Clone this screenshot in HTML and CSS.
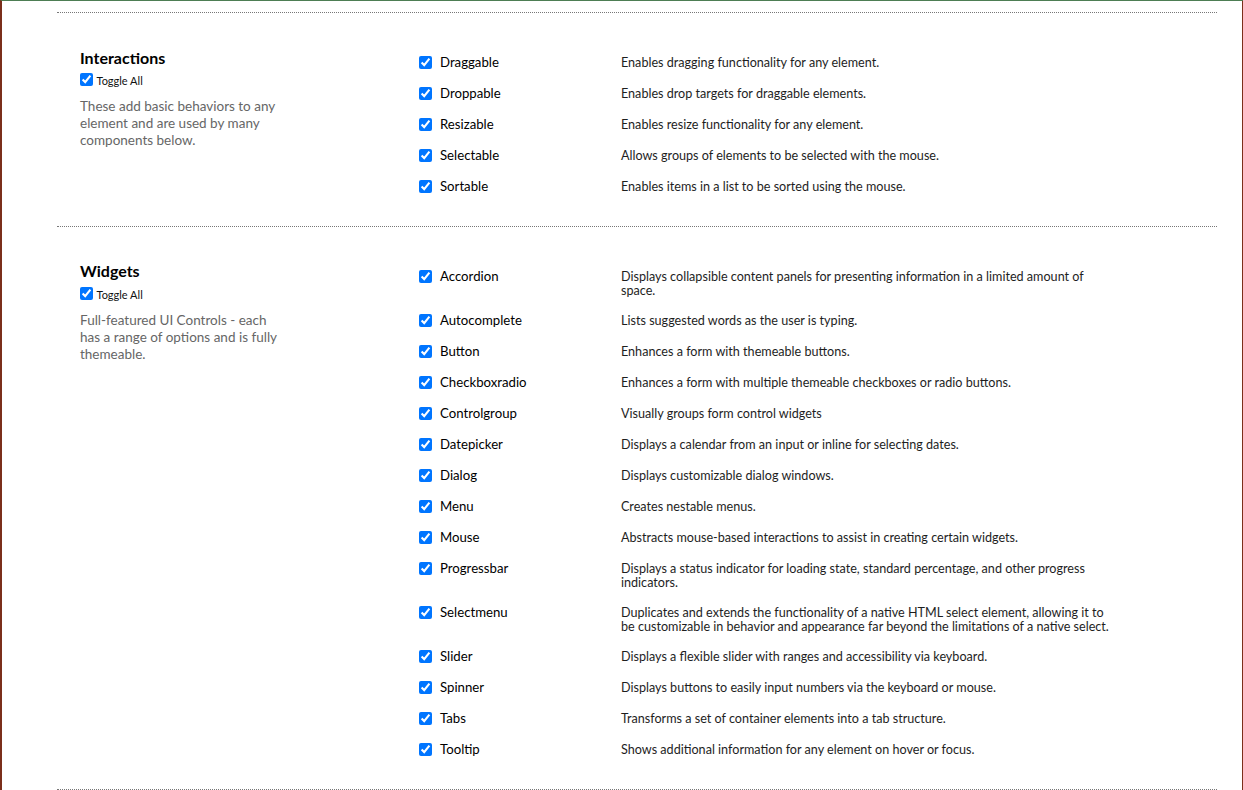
FILE: index.html
```html
<!DOCTYPE html>
<html>
<head>
<meta charset="utf-8">
<link rel="stylesheet" href="styles.css">
</head>
<body>
<div class="page">
  <section class="group">
    <div class="intro">
      <h2 class="group-title">Interactions</h2>
      <label class="toggle"><input type="checkbox" checked> Toggle All</label>
      <p class="group-desc">These add basic behaviors to any element and are used by many components below.</p>
    </div>
    <div class="items">
      <div class="item"><input type="checkbox" checked><span class="name">Draggable</span><span class="desc">Enables dragging functionality for any element.</span></div>
      <div class="item"><input type="checkbox" checked><span class="name">Droppable</span><span class="desc">Enables drop targets for draggable elements.</span></div>
      <div class="item"><input type="checkbox" checked><span class="name">Resizable</span><span class="desc">Enables resize functionality for any element.</span></div>
      <div class="item"><input type="checkbox" checked><span class="name">Selectable</span><span class="desc">Allows groups of elements to be selected with the mouse.</span></div>
      <div class="item"><input type="checkbox" checked><span class="name">Sortable</span><span class="desc">Enables items in a list to be sorted using the mouse.</span></div>
    </div>
  </section>
  <section class="group">
    <div class="intro">
      <h2 class="group-title">Widgets</h2>
      <label class="toggle"><input type="checkbox" checked> Toggle All</label>
      <p class="group-desc">Full-featured UI Controls - each has a range of options and is fully themeable.</p>
    </div>
    <div class="items">
      <div class="item"><input type="checkbox" checked><span class="name">Accordion</span><span class="desc">Displays collapsible content panels for presenting information in a limited amount of space.</span></div>
      <div class="item"><input type="checkbox" checked><span class="name">Autocomplete</span><span class="desc">Lists suggested words as the user is typing.</span></div>
      <div class="item"><input type="checkbox" checked><span class="name">Button</span><span class="desc">Enhances a form with themeable buttons.</span></div>
      <div class="item"><input type="checkbox" checked><span class="name">Checkboxradio</span><span class="desc">Enhances a form with multiple themeable checkboxes or radio buttons.</span></div>
      <div class="item"><input type="checkbox" checked><span class="name">Controlgroup</span><span class="desc">Visually groups form control widgets</span></div>
      <div class="item"><input type="checkbox" checked><span class="name">Datepicker</span><span class="desc">Displays a calendar from an input or inline for selecting dates.</span></div>
      <div class="item"><input type="checkbox" checked><span class="name">Dialog</span><span class="desc">Displays customizable dialog windows.</span></div>
      <div class="item"><input type="checkbox" checked><span class="name">Menu</span><span class="desc">Creates nestable menus.</span></div>
      <div class="item"><input type="checkbox" checked><span class="name">Mouse</span><span class="desc">Abstracts mouse-based interactions to assist in creating certain widgets.</span></div>
      <div class="item"><input type="checkbox" checked><span class="name">Progressbar</span><span class="desc">Displays a status indicator for loading state, standard percentage, and other progress indicators.</span></div>
      <div class="item"><input type="checkbox" checked><span class="name">Selectmenu</span><span class="desc">Duplicates and extends the functionality of a native HTML select element, allowing it to be customizable in behavior and appearance far beyond the limitations of a native select.</span></div>
      <div class="item"><input type="checkbox" checked><span class="name">Slider</span><span class="desc">Displays a flexible slider with ranges and accessibility via keyboard.</span></div>
      <div class="item"><input type="checkbox" checked><span class="name">Spinner</span><span class="desc">Displays buttons to easily input numbers via the keyboard or mouse.</span></div>
      <div class="item"><input type="checkbox" checked><span class="name">Tabs</span><span class="desc">Transforms a set of container elements into a tab structure.</span></div>
      <div class="item"><input type="checkbox" checked><span class="name">Tooltip</span><span class="desc">Shows additional information for any element on hover or focus.</span></div>
    </div>
  </section>
  <div class="group-end"></div>
</div>
</body>
</html>
```

FILE: styles.css
```css
html, body {
  margin: 0;
  padding: 0;
  background: #fff;
}
body {
  font-family: Lato, "Open Sans", sans-serif;
  color: #222;
}
.page {
  box-sizing: border-box;
  width: 1245px;
  min-height: 790px;
  border-left: 2px solid #7b2f1b;
  border-right: 3px solid #7b2f1b;
  border-top: 1px solid #4d7d53;
  padding: 11px 25px 0 55px;
}
.group {
  border-top: 1px dotted #777;
  display: grid;
  grid-template-columns: 339px 1fr;
  padding-left: 23px;
}
.group-end {
  border-top: 1px dotted #777;
}
.intro {
  padding-top: 35px;
}
.group + .group .intro {
  padding-top: 34px;
}
.group + .group .toggle {
  margin-top: 4px;
}
.group-title {
  margin: 0;
  font-size: 16px;
  line-height: 20px;
  font-weight: bold;
  color: #000;
}
.toggle {
  display: block;
  margin-top: 3px;
  font-size: 11px;
  line-height: 19px;
  height: 19px;
  color: #111;
}
.toggle input {
  margin: 0 1px 0 0;
  width: 13px;
  height: 13px;
  vertical-align: -1px;
}
.group-desc {
  margin: 8px 0 0;
  width: 206px;
  font-size: 13.5px;
  line-height: 17px;
  color: #666;
}
.items {
  padding: 34px 0 24px;
}
.item {
  display: grid;
  grid-template-columns: 21px 181px 492px;
  align-items: start;
  padding: 8px 0;
}
.item input {
  margin: 1px 0 0;
  width: 13px;
  height: 13px;
}
.name {
  font-size: 13.2px;
  line-height: 15px;
  color: #000;
}
.desc {
  font-size: 12.6px;
  line-height: 14px;
  color: #1e1e1e;
  padding-top: 1px;
  margin-bottom: -1px;
}
```
